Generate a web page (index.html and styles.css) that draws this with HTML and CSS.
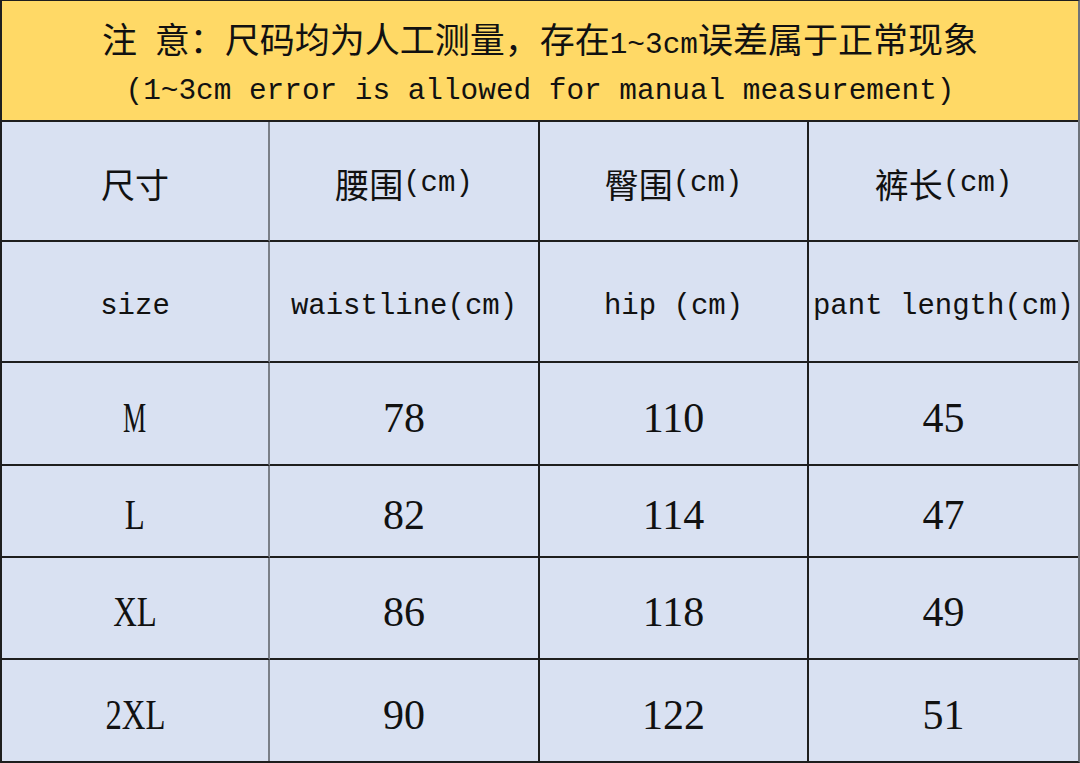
FILE: index.html
```html
<!DOCTYPE html>
<html lang="zh">
<head>
<meta charset="utf-8">
<link rel="stylesheet" href="styles.css">
</head>
<body>
<div class="sheet">
  <div class="notice">
    <div class="line1">注<span class="lat"> </span>意：尺码均为人工测量，存在<span class="lat">1~3cm</span>误差属于正常现象</div>
    <div class="line2">(1~3cm error is allowed for manual measurement)</div>
  </div>
  <div class="grid">
    <div class="cell c1 hrow">尺寸</div>
    <div class="cell c2 hrow">腰围<span class="lat">(cm)</span></div>
    <div class="cell c3 hrow">臀围<span class="lat">(cm)</span></div>
    <div class="cell c4 hrow">裤长<span class="lat">(cm)</span></div>

    <div class="cell c1 erow">size</div>
    <div class="cell c2 erow">waistline(cm)</div>
    <div class="cell c3 erow">hip (cm)</div>
    <div class="cell c4 erow">pant length(cm)</div>

    <div class="cell c1 drow r1"><span class="sz m">M</span></div>
    <div class="cell c2 drow r1">78</div>
    <div class="cell c3 drow r1">110</div>
    <div class="cell c4 drow r1">45</div>

    <div class="cell c1 drow r2"><span class="sz">L</span></div>
    <div class="cell c2 drow r2">82</div>
    <div class="cell c3 drow r2">114</div>
    <div class="cell c4 drow r2">47</div>

    <div class="cell c1 drow r3"><span class="sz">XL</span></div>
    <div class="cell c2 drow r3">86</div>
    <div class="cell c3 drow r3">118</div>
    <div class="cell c4 drow r3">49</div>

    <div class="cell c1 drow r4"><span class="sz">2XL</span></div>
    <div class="cell c2 drow r4">90</div>
    <div class="cell c3 drow r4">122</div>
    <div class="cell c4 drow r4">51</div>
  </div>
</div>
</body>
</html>
```

FILE: styles.css
```css
html, body {
  margin: 0;
  padding: 0;
  background: #ffffff;
}
.sheet {
  width: 1080px;
  height: 763px;
  box-sizing: border-box;
  border-left: 2px solid #1e1e1e;
  border-right: 2px solid #6e737a;
  border-bottom: 2px solid #1e1e1e;
  border-top: 1px solid #1e1e1e;
  font-family: "Noto Sans CJK SC", sans-serif;
  color: #111;
  overflow: hidden;
}
.notice {
  height: 121px;
  box-sizing: border-box;
  padding-top: 8px;
  background: #ffd966;
  border-bottom: 2px solid #1e1e1e;
  display: flex;
  flex-direction: column;
  align-items: center;
  justify-content: center;
}
.line1 {
  font-size: 35px;
  line-height: 46px;
  white-space: pre;
}
.line2 {
  font-family: "Liberation Mono", monospace;
  font-size: 29.4px;
  line-height: 46px;
  white-space: pre;
}
.grid {
  display: grid;
  grid-template-columns: 268px 270px 269px 269px;
  grid-template-rows: 120px 121px 103px 92px 102px 101px;
  background: #d9e1f2;
}
.cell {
  display: flex;
  align-items: center;
  justify-content: center;
  border-bottom: 2px solid #1e1e1e;
  border-right: 2px solid #1e1e1e;
  box-sizing: border-box;
  font-size: 34px;
  white-space: pre;
}
.c1 {
  border-right-color: #7a7f88;
}
.c4 {
  border-right: none;
}
.r4 {
  border-bottom: none;
}
.hrow {
  padding-top: 4px;
}
.erow {
  padding-top: 10px;
  font-family: "Liberation Mono", monospace;
  font-size: 29px;
}
.lat {
  font-family: "Liberation Mono", monospace;
  font-size: 29px;
  white-space: pre;
}
.line1 .lat {
  font-size: 29.4px;
}
.drow {
  font-family: "Liberation Serif", serif;
  font-size: 42px;
  padding-top: 8px;
}
.sz {
  display: inline-block;
  transform: scaleX(0.78);
}
.sz.m {
  transform: scaleX(0.62);
}
```
